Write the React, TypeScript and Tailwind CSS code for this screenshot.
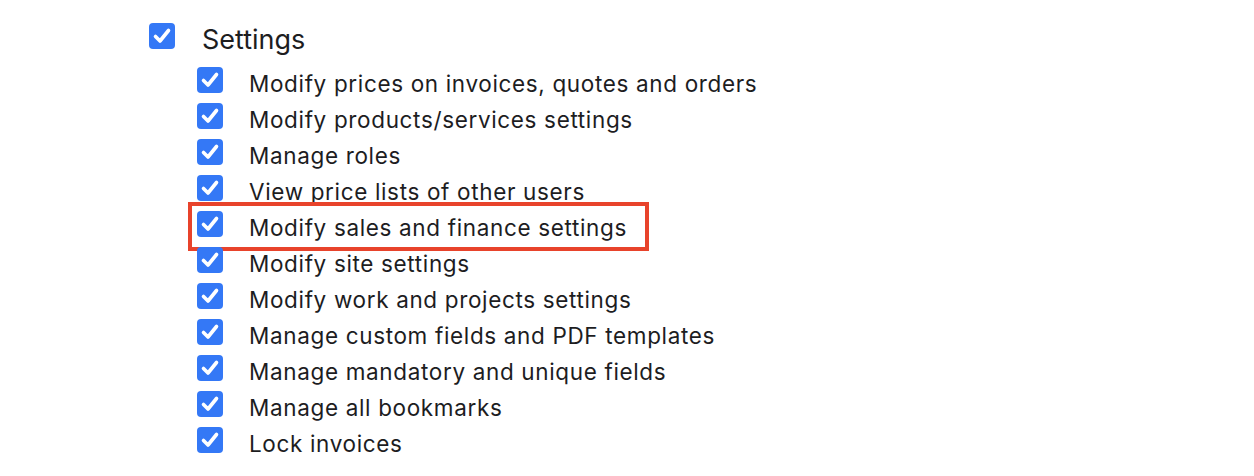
import React from 'react';

const ITEMS = [
  'Modify prices on invoices, quotes and orders',
  'Modify products/services settings',
  'Manage roles',
  'View price lists of other users',
  'Modify sales and finance settings',
  'Modify site settings',
  'Modify work and projects settings',
  'Manage custom fields and PDF templates',
  'Manage mandatory and unique fields',
  'Manage all bookmarks',
  'Lock invoices',
];

const Check: React.FC = () => (
  <span className="flex h-[26px] w-[26px] shrink-0 items-center justify-center rounded-[4px] bg-[#3478f6]">
    <svg viewBox="0 0 26 26" className="h-[26px] w-[26px]">
      <path
        d="M6.5 13.5 L11 18 L19.5 7.5"
        fill="none"
        stroke="#fff"
        strokeWidth="3.6"
        strokeLinecap="round"
        strokeLinejoin="round"
      />
    </svg>
  </span>
);

const App: React.FC = () => {
  return (
    <div className="h-[476px] w-[1254px] overflow-hidden bg-white pl-[149px] pt-[23px] text-[#1d1d1f] font-['Inter',sans-serif]">
      <div className="flex h-[26px] items-start">
        <Check />
        <span className="ml-[27px] text-[27px] leading-[34px]">Settings</span>
      </div>
      <div className="mt-[18px] pl-[48px]">
        {ITEMS.map((label, i) => (
          <div key={label} className="relative flex h-[36px] items-start">
            {i === 4 && (
              <span className="absolute left-[-9px] top-[-9px] h-[49px] w-[461px] border-4 border-[#e8432b]" />
            )}
            <Check />
            <span className="ml-[26px] text-[22.5px] leading-[34px] tracking-[0.65px]">{label}</span>
          </div>
        ))}
      </div>
    </div>
  );
};

export default App;
